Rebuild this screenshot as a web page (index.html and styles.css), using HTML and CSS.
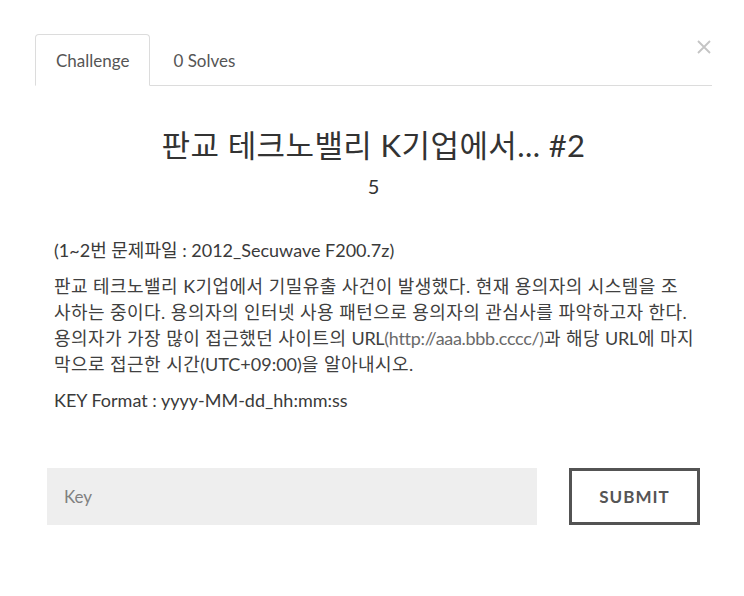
FILE: index.html
```html
<!DOCTYPE html>
<html lang="ko">
<head>
<meta charset="utf-8">
<title>Challenge</title>
<link rel="stylesheet" href="styles.css">
</head>
<body>
<div class="modal">
  <div class="tabs-row">
    <ul class="tabs">
      <li class="tab active">Challenge</li>
      <li class="tab">0 Solves</li>
    </ul>
    <button class="close" aria-label="Close">
      <svg width="14" height="14" viewBox="0 0 14 14"><path d="M1 1L13 13M13 1L1 13" stroke="#c4c4c4" stroke-width="1.8" fill="none"/></svg>
    </button>
  </div>
  <div class="head">
    <h2 class="title">판교 테크노밸리 K기업에서... #2</h2>
    <div class="points">5</div>
  </div>
  <div class="desc">
    <p class="file">(1~2번 문제파일 : 2012_Secuwave F200.7z)</p>
    <p class="body">판교 테크노밸리 K기업에서 기밀유출 사건이 발생했다. 현재 용의자의 시스템을 조<br>사하는 중이다. 용의자의 인터넷 사용 패턴으로 용의자의 관심사를 파악하고자 한다.<br>용의자가 가장 많이 접근했던 사이트의 <span class="lat tight">URL</span><span class="link">(http://aaa.bbb.cccc/)</span>과 해당 <span class="lat tight">URL</span>에 마지<br>막으로 접근한 시간<span class="lat">(UTC+09:00)</span>을 알아내시오.</p>
    <p class="fmt">KEY Format : yyyy-MM-dd_hh:mm:ss</p>
  </div>
  <div class="form">
    <input class="key" type="text" placeholder="Key">
    <button class="submit">SUBMIT</button>
  </div>
</div>
</body>
</html>
```

FILE: styles.css
```css
html, body {
  margin: 0;
  padding: 0;
  background: #fff;
}
body {
  font-family: Lato, "Noto Sans CJK KR", sans-serif;
  color: #3a3a3a;
}
.modal {
  width: 677px;
  padding: 34px 0 0 35px;
}
.tabs-row {
  display: flex;
  align-items: flex-start;
  border-bottom: 1px solid #dcdcdc;
}
.tabs {
  display: flex;
  list-style: none;
  margin: 0 0 -1px 0;
  padding: 0;
}
.tab {
  font-size: 17px;
  line-height: 24px;
  padding: 14px 20px 12px 20px;
  border: 1px solid transparent;
  border-radius: 4px 4px 0 0;
  color: #555;
}
.tab + .tab {
  padding-left: 22px;
}
.tab.active {
  border-color: #dcdcdc;
  border-bottom-color: #fff;
  background: #fff;
}
.close {
  margin-left: auto;
  margin-top: 6px;
  margin-right: 1px;
  padding: 0;
  border: 0;
  background: none;
  width: 14px;
  height: 14px;
  display: flex;
}
.head {
  text-align: center;
  padding-top: 39px;
}
.title {
  font-weight: 400;
  font-size: 31px;
  letter-spacing: 0.4px;
  line-height: 40px;
  margin: 0;
  color: #333;
}
.points {
  font-size: 20px;
  line-height: 28px;
  margin-top: 7px;
  color: #333;
}
.desc {
  padding: 0 19px;
  margin-top: 37px;
  font-size: 18px;
  line-height: 26px;
  white-space: nowrap;
}
.desc p {
  margin: 0;
}
.desc .file {
  margin-bottom: 10px;
}
.desc .body {
  margin-bottom: 10px;
  letter-spacing: 0.45px;
  color: #404040;
}
.lat {
  letter-spacing: 0;
}
.lat.tight {
  letter-spacing: -0.3px;
}
.link {
  color: #6a6a6a;
  letter-spacing: -0.3px;
}
.form {
  display: flex;
  gap: 32px;
  padding: 0 12px;
  margin-top: 55px;
}
.key {
  flex: 1;
  height: 57px;
  box-sizing: border-box;
  border: 0;
  background: #eeeeee;
  padding: 0 17px;
  font-family: Lato, sans-serif;
  font-size: 17px;
  color: #333;
  outline: none;
}
.key::placeholder {
  color: #808080;
}
.submit {
  width: 131px;
  height: 57px;
  box-sizing: border-box;
  border: 3px solid #535353;
  background: #fff;
  font-family: Lato, sans-serif;
  font-weight: 700;
  font-size: 17px;
  letter-spacing: 1px;
  color: #555;
}
```
